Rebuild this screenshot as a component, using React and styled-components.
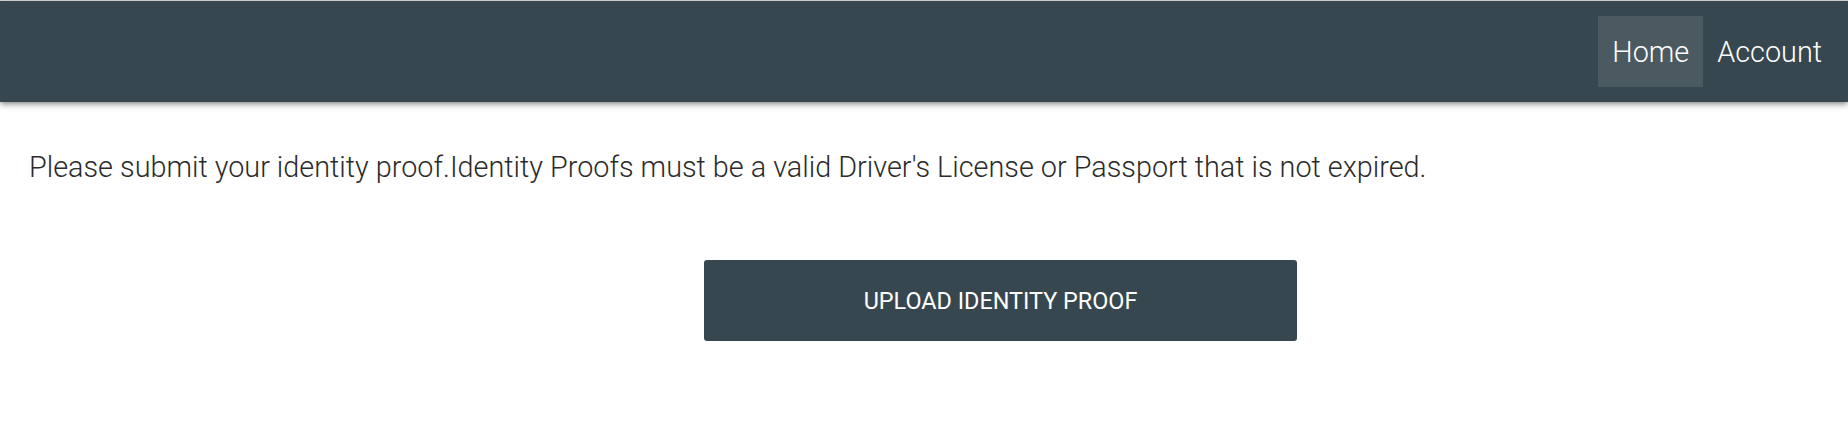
import React from "react";
import styled, { createGlobalStyle } from "styled-components";

const Global = createGlobalStyle`
  html, body { margin: 0; padding: 0; background: #fff; }
  body { font-family: Roboto, "Liberation Sans", sans-serif; }
  * { box-sizing: border-box; }
`;

const Page = styled.div`
  border-top: 1px solid #d6d8d9;
  min-height: 424px;
`;

const NavBar = styled.nav`
  height: 101px;
  background: #37474f;
  display: flex;
  justify-content: flex-end;
  align-items: center;
  padding-right: 12px;
  box-shadow: 0 4px 5px 0 rgba(0,0,0,.14), 0 1px 10px 0 rgba(0,0,0,.12), 0 2px 4px -1px rgba(0,0,0,.3);
  position: relative;
`;

const NavLink = styled.a`
  display: flex;
  align-items: center;
  height: 71px;
  padding: 0 14px;
  color: #fff;
  font-size: 28.8px;
  font-weight: 300;
  text-decoration: none;
  background: ${(p) => (p.$active ? "rgba(255,255,255,0.1)" : "transparent")};
`;

const Content = styled.main`
  padding: 44px 29px 0;
`;

const Message = styled.p`
  margin: 0;
  font-size: 28.8px;
  line-height: 42px;
  font-weight: 300;
  color: #2b2b2b;
`;

const ButtonRow = styled.div`
  padding-top: 72px;
  padding-left: 675px;
`;

const UploadButton = styled.button`
  width: 593px;
  height: 81px;
  border: none;
  border-radius: 3px;
  background: #37474f;
  color: #fff;
  font-family: Roboto, "Liberation Sans", sans-serif;
  font-size: 23.4px;
  font-weight: 400;
  text-transform: uppercase;
  cursor: pointer;
`;

export default function App() {
  return (
    <>
      <Global />
      <Page>
        <NavBar>
          <NavLink href="#" $active>Home</NavLink>
          <NavLink href="#">Account</NavLink>
        </NavBar>
        <Content>
          <Message>
            Please submit your identity proof.Identity Proofs must be a valid Driver's License or Passport that is not expired.
          </Message>
          <ButtonRow>
            <UploadButton>Upload Identity Proof</UploadButton>
          </ButtonRow>
        </Content>
      </Page>
    </>
  );
}
